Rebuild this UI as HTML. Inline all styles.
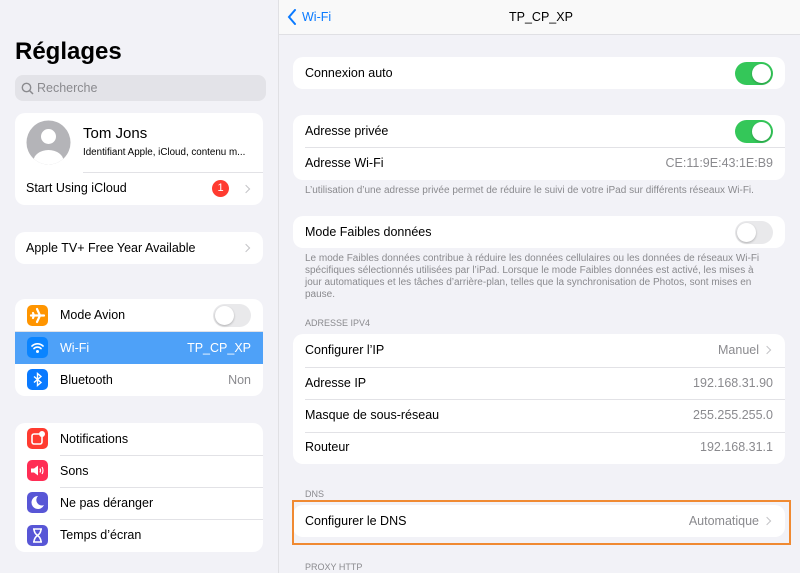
<!DOCTYPE html>
<html><head><meta charset="utf-8"><style>
*{margin:0;padding:0;box-sizing:border-box}
body{width:800px;height:573px;overflow:hidden;background:#f2f2f7;font-family:"Liberation Sans",sans-serif;color:#000;position:relative}
.a{position:absolute}
.card{position:absolute;background:#fff;border-radius:10px;overflow:hidden}
.row{position:absolute;left:0;right:0;height:33px;font-size:12.5px;line-height:33px}
.lbl{position:absolute;left:12px}
.val{position:absolute;right:12px;color:#8a8a8e}
.sep{position:absolute;right:0;height:1px;background:#e2e2e6}
.chev{position:absolute;width:6px;height:6px;border-right:1.5px solid #c4c4c7;border-top:1.5px solid #c4c4c7;transform:rotate(45deg)}
.tg{position:absolute;width:38px;height:23px;border-radius:12px;background:#34c759}
.tg::after{content:"";position:absolute;top:2px;right:2px;width:19px;height:19px;border-radius:50%;background:#fff;box-shadow:0 1px 2px rgba(0,0,0,.25)}
.tg.off{background:#e9e9eb}
.tg.off::after{right:auto;left:2px}
.foot{position:absolute;left:305px;font-size:10px;color:#8a8a8e;line-height:12px}
.hdr{position:absolute;left:305px;font-size:9px;color:#8a8a8e}
.ic{position:absolute;left:12px;width:21px;height:21px;border-radius:5px;top:6px}
.lr .lbl{left:45px}
</style></head><body>
<div class="a" style="left:278px;top:0;width:1px;height:573px;background:#e0e0e4"></div>
<div class="a" style="left:15px;top:38px;font-size:24px;font-weight:bold">Réglages</div>
<div class="a" style="left:15px;top:75px;width:251px;height:26px;background:#e3e3e8;border-radius:8px">
 <svg class="a" style="left:6px;top:7px" width="13" height="13" viewBox="0 0 13 13"><circle cx="5.5" cy="5.5" r="4.2" fill="none" stroke="#8a8a8e" stroke-width="1.4"/><path d="M8.6 8.6L12 12" stroke="#8a8a8e" stroke-width="1.5"/></svg>
 <div class="a" style="left:22px;top:6px;font-size:12.5px;color:#8a8a8e">Recherche</div>
</div>
<div class="card" style="left:15px;top:113px;width:248px;height:92px">
 <svg class="a" style="left:11px;top:7px" width="45" height="45" viewBox="0 0 45 45"><defs><clipPath id="c"><circle cx="22.5" cy="22.5" r="22"/></clipPath></defs><circle cx="22.5" cy="22.5" r="22" fill="#b4b4b8"/><g clip-path="url(#c)" fill="#fff"><circle cx="22.5" cy="16.5" r="7.5"/><ellipse cx="22.5" cy="41" rx="15" ry="11"/></g></svg>
 <div class="a" style="left:68px;top:12px;font-size:15px">Tom Jons</div>
 <div class="a" style="left:68px;top:34px;font-size:9.8px">Identifiant Apple, iCloud, contenu m...</div>
 <div class="sep" style="left:68px;top:59px"></div>
 <div class="a" style="left:11px;top:68px;font-size:12.5px">Start Using iCloud</div>
 <div class="a" style="left:197px;top:67px;width:17px;height:17px;border-radius:50%;background:#ff3b30;color:#fff;font-size:11px;text-align:center;line-height:17px">1</div>
 <div class="chev" style="left:228px;top:73px"></div>
</div>
<div class="card" style="left:15px;top:232px;width:248px;height:32px">
 <div class="a" style="left:11px;top:9px;font-size:12.5px">Apple TV+ Free Year Available</div>
 <div class="chev" style="left:228px;top:13px"></div>
</div>
<div class="card lr" style="left:15px;top:299px;width:248px;height:97px">
 <div class="row" style="top:0"><div class="ic" style="background:#ff9500"><svg width="21" height="21" viewBox="0 0 21 21"><path d="M4 10.5h13M10 4l3 6.5-3 6.5M6 8l1 2.5-1 2.5" stroke="#fff" stroke-width="2.2" fill="none" stroke-linecap="round"/></svg></div><span class="lbl">Mode Avion</span><div class="tg off" style="right:12px;top:5px"></div></div>
 <div class="sep" style="left:0;top:32px"></div>
 <div class="row" style="top:33px;height:32px;line-height:32px;background:#4ea1f8;color:#fff"><div class="ic" style="background:#0a84ff;top:5px"><svg width="21" height="21" viewBox="0 0 21 21"><path d="M5 9a8 8 0 0 1 11 0M7 11.5a5 5 0 0 1 7 0" stroke="#fff" stroke-width="1.7" fill="none" stroke-linecap="round"/><circle cx="10.5" cy="14.5" r="1.5" fill="#fff"/></svg></div><span class="lbl">Wi-Fi</span><span class="val" style="color:#fff">TP_CP_XP</span></div>
 <div class="row" style="top:65px;height:32px;line-height:32px"><div class="ic" style="background:#0a7aff;top:5px"><svg width="21" height="21" viewBox="0 0 21 21"><path d="M7 7.5l7 6-3.5 3v-12l3.5 3-7 6" stroke="#fff" stroke-width="1.4" fill="none"/></svg></div><span class="lbl">Bluetooth</span><span class="val">Non</span></div>
</div>
<div class="card lr" style="left:15px;top:423px;width:248px;height:129px">
 <div class="row" style="top:0;height:32px;line-height:32px"><div class="ic" style="background:#ff3b30;top:5px"><svg width="21" height="21" viewBox="0 0 21 21"><rect x="5" y="6" width="10" height="10" rx="2" fill="none" stroke="#fff" stroke-width="1.6"/><circle cx="15" cy="6" r="3" fill="#fff"/></svg></div><span class="lbl">Notifications</span></div>
 <div class="sep" style="left:45px;top:32px"></div>
 <div class="row" style="top:32px;height:32px;line-height:32px"><div class="ic" style="background:#ff2d55;top:5px"><svg width="21" height="21" viewBox="0 0 21 21"><path d="M4 8.5h3l4-3v10l-4-3H4z" fill="#fff"/><path d="M13 8.5q1 2 0 4M15 7q2 3.5 0 7" stroke="#fff" stroke-width="1.2" fill="none"/></svg></div><span class="lbl">Sons</span></div>
 <div class="sep" style="left:45px;top:64px"></div>
 <div class="row" style="top:64px;height:32px;line-height:32px"><div class="ic" style="background:#5856d6;top:5px"><svg width="21" height="21" viewBox="0 0 21 21"><path d="M11 4a6.5 6.5 0 1 0 6 9 5.5 5.5 0 0 1-6-9z" fill="#fff"/></svg></div><span class="lbl">Ne pas déranger</span></div>
 <div class="sep" style="left:45px;top:96px"></div>
 <div class="row" style="top:96px;height:33px;line-height:33px"><div class="ic" style="background:#5856d6"><svg width="21" height="21" viewBox="0 0 21 21"><path d="M6 4h9M6 17h9M7 4q0 4 3.5 6.5Q7 13 7 17M14 4q0 4-3.5 6.5Q14 13 14 17" stroke="#fff" stroke-width="1.6" fill="none"/></svg></div><span class="lbl">Temps d’écran</span></div>
</div>
<div class="a" style="left:279px;top:0;width:521px;height:35px;background:#f9f9f9;border-bottom:1px solid #e0e0e4"></div>
<svg class="a" style="left:287px;top:9px" width="10" height="16" viewBox="0 0 10 16"><path d="M8 1L2 8l6 7" stroke="#0a7aff" stroke-width="2" fill="none" stroke-linecap="round"/></svg>
<div class="a" style="left:302px;top:10px;font-size:12.5px;color:#0a7aff">Wi-Fi</div>
<div class="a" style="left:509px;top:10px;font-size:12.5px">TP_CP_XP</div>
<div class="card" style="left:293px;top:57px;width:492px;height:32px"><div class="row" style="height:32px;line-height:32px"><span class="lbl">Connexion auto</span><div class="tg" style="right:12px;top:5px"></div></div></div>
<div class="card" style="left:293px;top:115px;width:492px;height:65px">
 <div class="row" style="top:0;height:32px;line-height:32px"><span class="lbl">Adresse privée</span><div class="tg" style="right:12px;top:5px"></div></div>
 <div class="sep" style="left:12px;top:32px"></div>
 <div class="row" style="top:32px"><span class="lbl">Adresse Wi-Fi</span><span class="val">CE:11:9E:43:1E:B9</span></div>
</div>
<div class="foot" style="top:185px;white-space:nowrap">L’utilisation d’une adresse privée permet de réduire le suivi de votre iPad sur différents réseaux Wi-Fi.</div>
<div class="card" style="left:293px;top:216px;width:492px;height:32px"><div class="row" style="height:32px;line-height:32px"><span class="lbl">Mode Faibles données</span><div class="tg off" style="right:12px;top:5px"></div></div></div>
<div class="foot" style="top:253px;width:470px">Le mode Faibles données contribue à réduire les données cellulaires ou les données de réseaux Wi-Fi<br>spécifiques sélectionnés utilisées par l’iPad. Lorsque le mode Faibles données est activé, les mises à<br>jour automatiques et les tâches d’arrière-plan, telles que la synchronisation de Photos, sont mises en<br>pause.</div>
<div class="hdr" style="top:318px">ADRESSE IPV4</div>
<div class="card" style="left:293px;top:334px;width:492px;height:130px">
 <div class="row" style="top:0"><span class="lbl">Configurer l’IP</span><span class="val" style="right:26px">Manuel</span><div class="chev" style="right:15px;top:13px"></div></div>
 <div class="sep" style="left:12px;top:33px"></div>
 <div class="row" style="top:33px"><span class="lbl">Adresse IP</span><span class="val">192.168.31.90</span></div>
 <div class="sep" style="left:12px;top:65px"></div>
 <div class="row" style="top:65px"><span class="lbl">Masque de sous-réseau</span><span class="val">255.255.255.0</span></div>
 <div class="sep" style="left:12px;top:98px"></div>
 <div class="row" style="top:97px"><span class="lbl">Routeur</span><span class="val">192.168.31.1</span></div>
</div>
<div class="hdr" style="top:489px">DNS</div>
<div class="card" style="left:293px;top:505px;width:492px;height:32px"><div class="row" style="height:32px;line-height:32px"><span class="lbl">Configurer le DNS</span><span class="val" style="right:26px">Automatique</span><div class="chev" style="right:15px;top:13px"></div></div></div>
<div class="a" style="left:292px;top:500px;width:499px;height:45px;border:2px solid #f08a32"></div>
<div class="hdr" style="top:562px">PROXY HTTP</div>
</body></html>
